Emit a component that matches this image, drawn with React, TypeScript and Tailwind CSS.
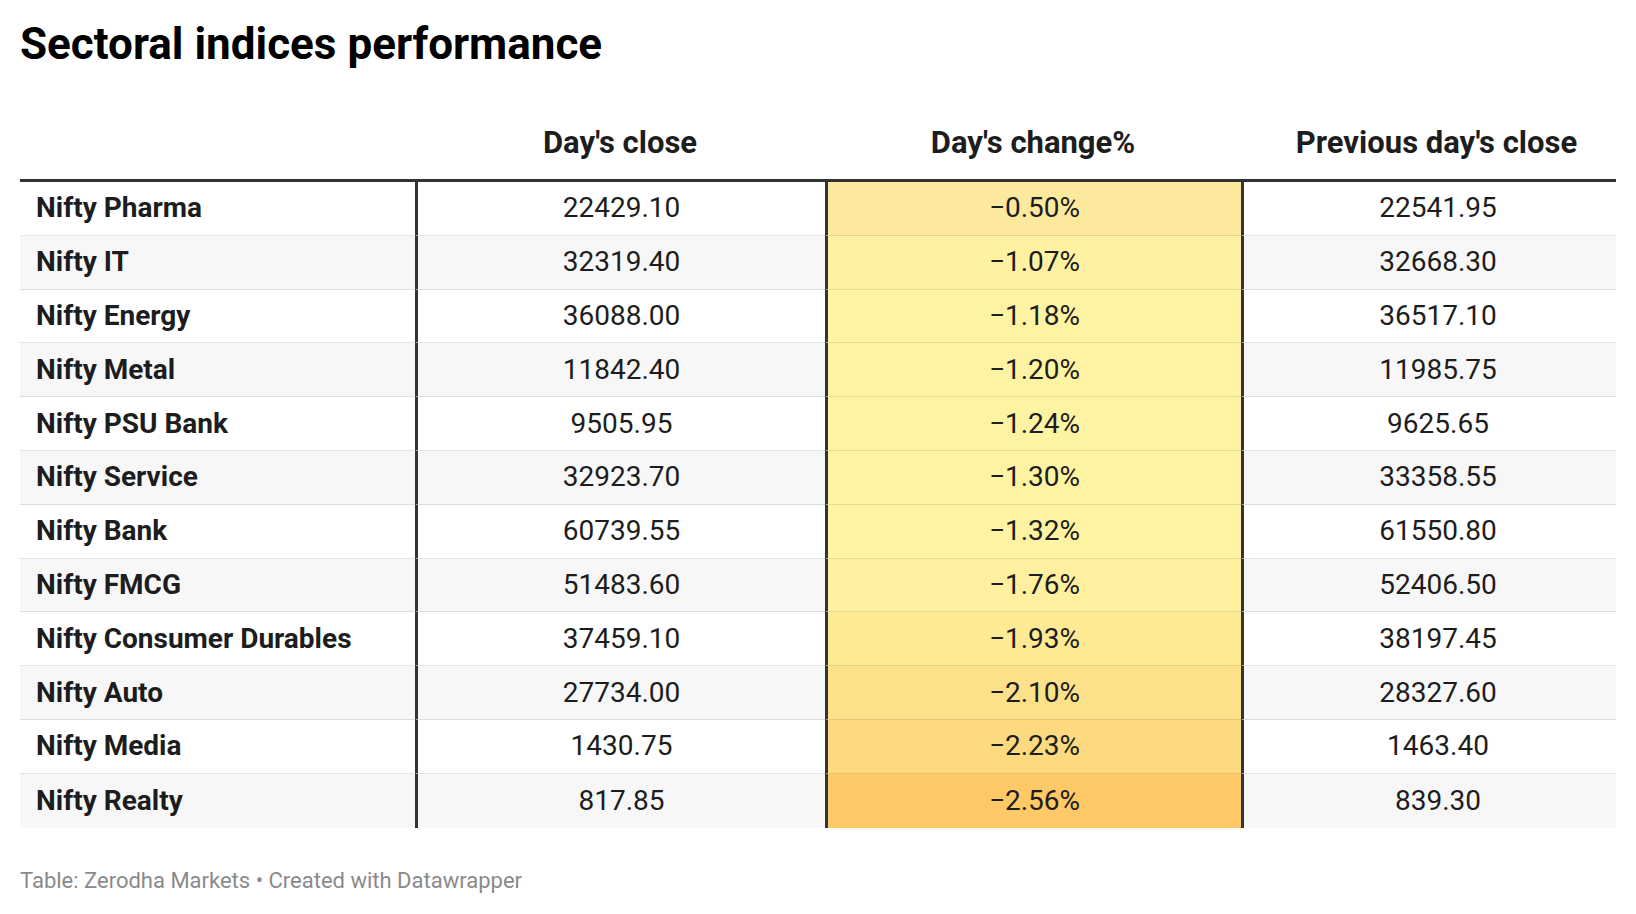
const rows = [
  { name: 'Nifty Pharma', close: '22429.10', change: '−0.50%', prev: '22541.95', color: 'bg-[#fde99e]' },
  { name: 'Nifty IT', close: '32319.40', change: '−1.07%', prev: '32668.30', color: 'bg-[#fef2a2]' },
  { name: 'Nifty Energy', close: '36088.00', change: '−1.18%', prev: '36517.10', color: 'bg-[#fef3a3]' },
  { name: 'Nifty Metal', close: '11842.40', change: '−1.20%', prev: '11985.75', color: 'bg-[#fef3a3]' },
  { name: 'Nifty PSU Bank', close: '9505.95', change: '−1.24%', prev: '9625.65', color: 'bg-[#fef3a3]' },
  { name: 'Nifty Service', close: '32923.70', change: '−1.30%', prev: '33358.55', color: 'bg-[#fef3a3]' },
  { name: 'Nifty Bank', close: '60739.55', change: '−1.32%', prev: '61550.80', color: 'bg-[#fef3a3]' },
  { name: 'Nifty FMCG', close: '51483.60', change: '−1.76%', prev: '52406.50', color: 'bg-[#fef09f]' },
  { name: 'Nifty Consumer Durables', close: '37459.10', change: '−1.93%', prev: '38197.45', color: 'bg-[#fee994]' },
  { name: 'Nifty Auto', close: '27734.00', change: '−2.10%', prev: '28327.60', color: 'bg-[#fde18a]' },
  { name: 'Nifty Media', close: '1430.75', change: '−2.23%', prev: '1463.40', color: 'bg-[#fdda7f]' },
  { name: 'Nifty Realty', close: '817.85', change: '−2.56%', prev: '839.30', color: 'bg-[#fec966]' },
];

const App = () => {
  return (
    <div className="min-h-screen bg-white px-[20px] pt-[19px] font-['Roboto',sans-serif] text-[#1d1d1d]">
      <h1 className="text-[44px] font-bold leading-[50px] text-black">Sectoral indices performance</h1>

      <div className="mt-[56px]">
        {/* header */}
        <div className="grid grid-cols-[395px_410px_416px_1fr] border-b-[3px] border-[#333] pb-[18px] text-[31px] font-bold leading-[36px]">
          <div></div>
          <div className="text-center">Day's close</div>
          <div className="text-center">Day's change%</div>
          <div className="pl-[16px] text-center">Previous day's close</div>
        </div>

        {rows.map((r, i) => {
          const last = i === rows.length - 1;
          const zebra = i % 2 === 1 ? 'bg-[#f7f7f7]' : 'bg-white';
          const line = last ? '' : 'border-b border-black/10';
          return (
            <div key={r.name} className={`grid grid-cols-[395px_410px_416px_1fr] text-[28px] ${zebra}`}>
              <div className={`flex h-[53.8px] items-center pl-[16px] font-bold ${line}`}>{r.name}</div>
              <div className={`flex h-[53.8px] items-center justify-center border-l-[3px] border-l-[#333] ${line}`}>{r.close}</div>
              <div className={`flex h-[53.8px] items-center justify-center border-l-[3px] border-l-[#333] ${r.color} ${line}`}>{r.change}</div>
              <div className={`flex h-[53.8px] items-center justify-center border-l-[3px] border-l-[#333] pl-[16px] ${line}`}>{r.prev}</div>
            </div>
          );
        })}
      </div>

      <p className="mt-[40px] text-[22px] leading-[26px] text-[#8a8a8a]">Table: Zerodha Markets • Created with Datawrapper</p>
    </div>
  );
};

export default App;
